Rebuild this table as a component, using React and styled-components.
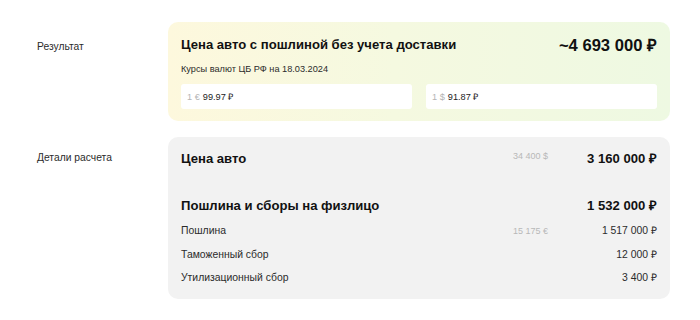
import React from "react";
import styled, { createGlobalStyle } from "styled-components";

const Global = createGlobalStyle`
  html, body { margin: 0; padding: 0; background: #ffffff; }
  body { font-family: "Liberation Sans", Arial, sans-serif; color: #1a1a1a; }
`;

const Page = styled.div`
  width: 700px;
  padding: 22px 30px 0 0;
  box-sizing: border-box;
  display: grid;
  grid-template-columns: 168px 1fr;
  row-gap: 16px;
`;

const SideLabel = styled.div`
  padding-left: 37px;
  padding-top: ${(p) => p.$top}px;
  font-size: 10.3px;
  line-height: 14px;
  color: #2b2b2b;
`;

const ResultCard = styled.div`
  border-radius: 10px;
  padding: 12px 13px 12px;
  background: linear-gradient(90deg, #fdf8dd 0%, #f5f9e0 45%, #eef9e2 100%);
`;

const HeadRow = styled.div`
  display: flex;
  justify-content: space-between;
  align-items: center;
  height: 20px;
`;

const Title = styled.div`
  font-size: 13.1px;
  font-weight: 700;
  color: #111;
`;

const BigPrice = styled.div`
  font-size: 16.6px;
  font-weight: 700;
  color: #111;
`;

const Subtitle = styled.div`
  margin-top: 9px;
  font-size: 9.2px;
  line-height: 12px;
  color: #2b2b2b;
`;

const RatesRow = styled.div`
  margin-top: 9px;
  display: grid;
  grid-template-columns: 1fr 1fr;
  column-gap: 14px;
`;

const RateBox = styled.div`
  height: 25px;
  background: #ffffff;
  border-radius: 3px;
  display: flex;
  align-items: center;
  padding-left: 6px;
  font-size: 9.2px;
  gap: 3px;
`;

const Muted = styled.span`
  color: #b4b4b4;
`;

const Dark = styled.span`
  color: #222;
`;

const DetailsCard = styled.div`
  border-radius: 10px;
  background: #f2f2f2;
  padding: 13px 13px 14px;
`;

const Row = styled.div`
  display: grid;
  grid-template-columns: 1fr 80px 109px;
  align-items: center;
  margin-top: ${(p) => p.$mt || 0}px;
  line-height: ${(p) => (p.$big ? 18 : 14)}px;
`;

const RowName = styled.div`
  font-size: ${(p) => (p.$big ? 13.1 : 10.4)}px;
  font-weight: ${(p) => (p.$big ? 700 : 400)};
  color: ${(p) => (p.$big ? "#111" : "#2b2b2b")};
`;

const RowForeign = styled.div`
  text-align: right;
  font-size: 9px;
  color: #b8b8b8;
  align-self: ${(p) => (p.$big ? "start" : "center")};
  line-height: ${(p) => (p.$big ? 13 : 14)}px;
`;

const RowValue = styled.div`
  text-align: right;
  font-size: ${(p) => (p.$big ? 13.1 : 10.4)}px;
  font-weight: ${(p) => (p.$big ? 700 : 400)};
  color: ${(p) => (p.$big ? "#111" : "#2b2b2b")};
`;

const rows = [
  { name: "Цена авто", foreign: "34 400 $", value: "3 160 000 ₽", big: true, mt: 0 },
  { name: "Пошлина и сборы на физлицо", foreign: "", value: "1 532 000 ₽", big: true, mt: 29 },
  { name: "Пошлина", foreign: "15 175 €", value: "1 517 000 ₽", mt: 9 },
  { name: "Таможенный сбор", foreign: "", value: "12 000 ₽", mt: 10 },
  { name: "Утилизационный сбор", foreign: "", value: "3 400 ₽", mt: 9 },
];

export default function App() {
  return (
    <>
      <Global />
      <Page>
        <SideLabel $top={18}>Результат</SideLabel>
        <ResultCard>
          <HeadRow>
            <Title>Цена авто с пошлиной без учета доставки</Title>
            <BigPrice>~4 693 000 ₽</BigPrice>
          </HeadRow>
          <Subtitle>Курсы валют ЦБ РФ на 18.03.2024</Subtitle>
          <RatesRow>
            <RateBox>
              <Muted>1 €</Muted>
              <Dark>99.97 ₽</Dark>
            </RateBox>
            <RateBox>
              <Muted>1 $</Muted>
              <Dark>91.87 ₽</Dark>
            </RateBox>
          </RatesRow>
        </ResultCard>
        <SideLabel $top={14}>Детали расчета</SideLabel>
        <DetailsCard>
          {rows.map((r) => (
            <Row key={r.name} $big={r.big} $mt={r.mt}>
              <RowName $big={r.big}>{r.name}</RowName>
              <RowForeign $big={r.big}>{r.foreign}</RowForeign>
              <RowValue $big={r.big}>{r.value}</RowValue>
            </Row>
          ))}
        </DetailsCard>
      </Page>
    </>
  );
}
